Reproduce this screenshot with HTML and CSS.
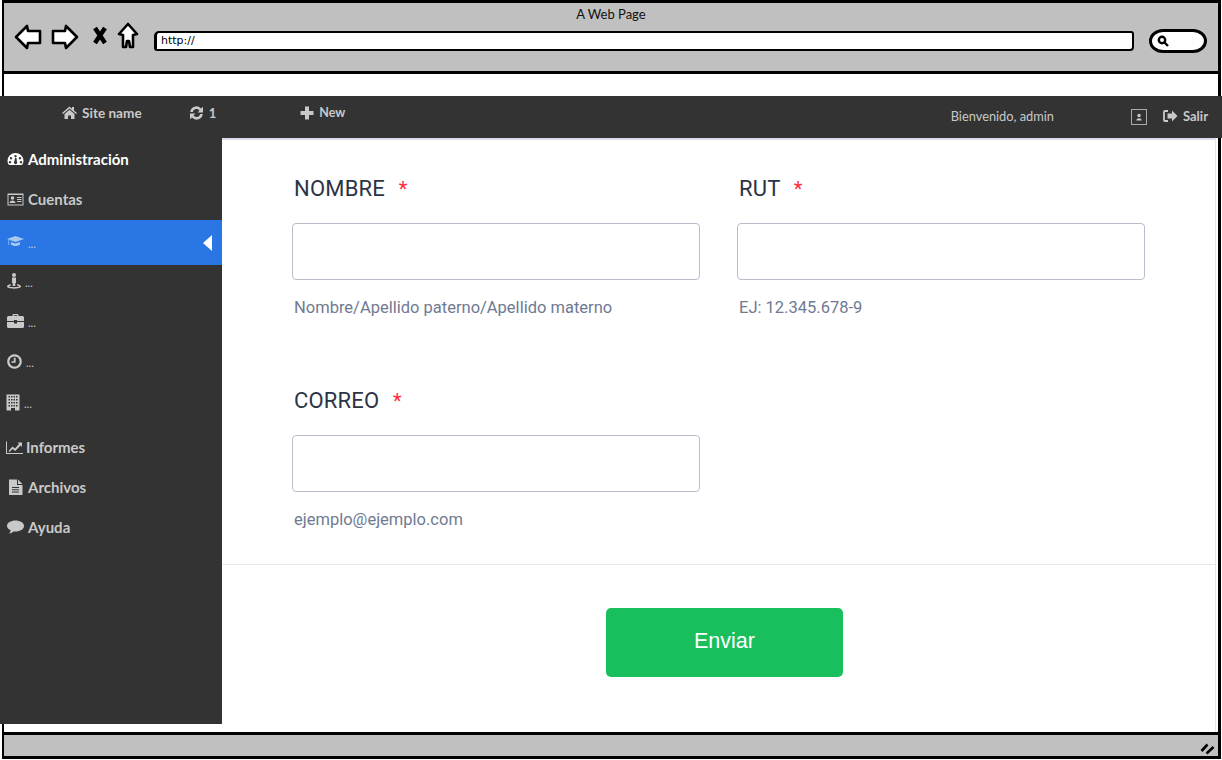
FILE: index.html
```html
<!DOCTYPE html>
<html lang="en">
<head>
    <meta charset="UTF-8">
    <title>A Web Page</title>
    <link rel="stylesheet" href="styles.css">
</head>
<body>
    <div class="window">
        <div class="chrome">
            <div class="chrome-title">A Web Page</div>
            <div class="chrome-tools">
                <svg class="tool tool-back" viewBox="0 0 28 26"><path d="M2 13 L13 2 L14 7 L26 7 L26 19 L14 19 L13 24 Z"/></svg>
                <svg class="tool tool-fwd" viewBox="0 0 28 26"><path d="M26 13 L15 2 L14 7 L2 7 L2 19 L14 19 L15 24 Z"/></svg>
                <svg class="tool tool-x" viewBox="0 0 16 19"><path d="M3 2 L13 17 M13 2 L3 17"/></svg>
                <svg class="tool tool-home" viewBox="0 0 22 27"><path d="M11 2 L20 12 L16 13 L16 25 L13 25 L12 19 L10 19 L9 25 L6 25 L6 13 L2 12 Z"/></svg>
                <div class="url-bar">http://</div>
                <div class="search-box">
                    <svg class="search-icon" viewBox="0 0 12 12"><circle cx="5" cy="5" r="3.2"/><path d="M7.5 7.5 L11 11"/></svg>
                </div>
            </div>
        </div>

        <div class="strip"></div>

        <!-- top navigation -->
        <div class="topnav">
            <div class="nav-item nav-site">
                <svg class="ico" width="15" height="13" viewBox="0 0 15 13"><path d="M7.5 0.5 L10 2.7 V1 H12 V4.5 L15 7 L14 8 L7.5 2.5 L1 8 L0 7 Z M2.5 8 L7.5 3.8 L12.5 8 V13 H9 V9.5 H6 V13 H2.5 Z"/></svg>
                <span>Site name</span>
            </div>
            <div class="nav-item nav-sync">
                <svg class="ico" width="15" height="14" viewBox="0 0 15 14"><path d="M1.2 6 A6.2 6.2 0 0 1 12 2.4 L14 0.8 V6.4 H8.6 L10.5 4.4 A3.8 3.8 0 0 0 3.8 6 Z M13.8 8 A6.2 6.2 0 0 1 3 11.6 L1 13.2 V7.6 H6.4 L4.5 9.6 A3.8 3.8 0 0 0 11.2 8 Z"/></svg>
                <span>1</span>
            </div>
            <div class="nav-item nav-new">
                <svg class="ico" width="14" height="14" viewBox="0 0 14 14"><path d="M5 0.5 H9 V5 H13.5 V9 H9 V13.5 H5 V9 H0.5 V5 H5 Z"/></svg>
                <span>New</span>
            </div>
            <div class="nav-item nav-welcome">Bienvenido, admin</div>
            <div class="nav-user">
                <svg class="ico" width="6" height="8" viewBox="0 0 8 9"><circle cx="4" cy="2.5" r="2.2"/><path d="M0.5 9 C0.5 5 7.5 5 7.5 9 Z"/></svg>
            </div>
            <div class="nav-item nav-exit">
                <svg class="ico" width="15" height="12" viewBox="0 0 15 12"><path d="M5 1 H2 Q1 1 1 2 V10 Q1 11 2 11 H5" fill="none" stroke="currentColor" stroke-width="1.8"/><path d="M9 0.5 L14.5 6 L9 11.5 V8.5 H4.5 V3.5 H9 Z"/></svg>
                <span>Salir</span>
            </div>
        </div>

        <div class="main">
            <ul class="sidebar">
                <li class="side-item side-current">
                    <svg class="ico" width="17" height="14" viewBox="0 0 17 14"><path fill-rule="evenodd" d="M8.5 1 A8 8 0 0 1 16.5 9 Q16.5 11.5 15 13 H2 Q0.5 11.5 0.5 9 A8 8 0 0 1 8.5 1 Z M8.5 3 a1.2 1.2 0 1 0 0.01 0 Z M4 5 a1.2 1.2 0 1 0 0.01 0 Z M13 5 a1.2 1.2 0 1 0 0.01 0 Z M3 9 a1.2 1.2 0 1 0 0.01 0 Z M14 9 a1.2 1.2 0 1 0 0.01 0 Z M8 6 L9.5 6 L9.8 9.2 A1.7 1.7 0 1 1 7.4 9.2 Z"/></svg>
                    <span>Administración</span>
                </li>
                <li class="side-item">
                    <svg class="ico" width="17" height="13" viewBox="0 0 17 13"><path fill-rule="evenodd" d="M0.5 0.5 H16.5 V12.5 H0.5 Z M1.5 2 V11.5 H15.5 V2 Z"/><circle cx="5.5" cy="5" r="1.8"/><path d="M2.5 10 C2.5 6.5 8.5 6.5 8.5 10 Z M10 4 H14.5 V5 H10 Z M10 6 H14.5 V7 H10 Z M10 8 H14.5 V9 H10 Z"/></svg>
                    <span>Cuentas</span>
                </li>
                <li class="side-item side-active">
                    <svg class="ico ico-cap" width="17" height="13" viewBox="0 0 17 13"><path d="M8.5 1 L17 4 L8.5 7 L0 4 Z M4 7 L8.5 8.6 L13 7 V9.5 Q8.5 12.5 4 9.5 Z M1.5 5 H2.2 V10 H1.5 Z"/></svg>
                    <span class="side-dots">...</span>
                    <span class="side-arrow"></span>
                </li>
                <li class="side-item">
                    <svg class="ico ico-view" width="14" height="16" viewBox="0 0 14 16"><circle cx="7" cy="2" r="2"/><path d="M5 4.5 H9 V10 H8.3 V13 H5.7 V10 H5 Z M4 11.3 V12.6 C2.8 12.8 2 13.2 2 13.6 C2 14.3 12 14.3 12 13.6 C12 13.2 11.2 12.8 10 12.6 V11.3 C12.4 11.6 14 12.4 14 13.6 C14 16.4 0 16.4 0 13.6 C0 12.4 1.6 11.6 4 11.3 Z"/></svg>
                    <span class="side-dots">...</span>
                </li>
                <li class="side-item">
                    <svg class="ico" width="17" height="14" viewBox="0 0 17 14"><path d="M5.5 2 V1 Q5.5 0 6.5 0 H10.5 Q11.5 0 11.5 1 V2 H15.5 Q17 2 17 3.5 V7 H10 V6 H7 V7 H0 V3.5 Q0 2 1.5 2 Z M6.8 2 H10.2 V1.2 H6.8 Z M0 8 H7 V9.5 H10 V8 H17 V12.5 Q17 14 15.5 14 H1.5 Q0 14 0 12.5 Z"/></svg>
                    <span class="side-dots">...</span>
                </li>
                <li class="side-item">
                    <svg class="ico" width="15" height="15" viewBox="0 0 15 15"><path fill-rule="evenodd" d="M7.5 0.2 A7.3 7.3 0 1 1 7.49 0.2 Z M7.5 2.4 A5.1 5.1 0 1 0 7.51 2.4 Z M6.8 3.8 H8.6 V8.8 H4.4 V7.2 H6.8 Z"/></svg>
                    <span class="side-dots">...</span>
                </li>
                <li class="side-item side-building">
                    <svg class="ico" width="14" height="17" viewBox="0 0 14 17"><path fill-rule="evenodd" d="M0.5 0.5 H13.5 V16.5 H9 V14 H5 V16.5 H0.5 Z M2.5 2 V3.5 H4 V2 Z M5 2 V3.5 H6.5 V2 Z M7.5 2 V3.5 H9 V2 Z M10 2 V3.5 H11.5 V2 Z M2.5 5 V6.5 H4 V5 Z M5 5 V6.5 H6.5 V5 Z M7.5 5 V6.5 H9 V5 Z M10 5 V6.5 H11.5 V5 Z M2.5 8 V9.5 H4 V8 Z M5 8 V9.5 H6.5 V8 Z M7.5 8 V9.5 H9 V8 Z M10 8 V9.5 H11.5 V8 Z M2.5 11 V12.5 H4 V11 Z M5 11 V12.5 H6.5 V11 Z M7.5 11 V12.5 H9 V11 Z M10 11 V12.5 H11.5 V11 Z"/></svg>
                    <span class="side-dots">...</span>
                </li>
                <li class="side-item side-reports">
                    <svg class="ico" width="17" height="13" viewBox="0 0 17 13"><path d="M0 0.5 H1 V12 H17 V13 H0 Z M2.5 10 L6.5 5.5 L9 7.5 L13 3 L11.5 1.5 H16 V6 L14.6 4.6 L9.2 10 L6.6 8 L3.5 11 Z"/></svg>
                    <span>Informes</span>
                </li>
                <li class="side-item side-files">
                    <svg class="ico" width="15" height="16" viewBox="0 0 15 16"><path fill-rule="evenodd" d="M1 0.5 H9 V6 H14.5 V16 H1 Z M10 0.5 L14.5 5 H10 Z M4 8 V9 H11 V8 Z M4 10.3 V11.3 H11 V10.3 Z M4 12.6 V13.6 H11 V12.6 Z"/></svg>
                    <span>Archivos</span>
                </li>
                <li class="side-item">
                    <svg class="ico" width="17" height="14" viewBox="0 0 17 14"><path d="M8.5 0.5 C13.2 0.5 17 2.8 17 6 C17 9.2 13.2 11.5 8.5 11.5 C7.8 11.5 7.2 11.4 6.6 11.4 C5.2 12.6 3.6 13.3 2 13.5 C3 12.5 3.6 11.4 3.7 10.3 C1.5 9.3 0 7.8 0 6 C0 2.8 3.8 0.5 8.5 0.5 Z"/></svg>
                    <span>Ayuda</span>
                </li>
            </ul>

            <div class="content">
                <form class="form-grid">
                    <div class="field">
                        <label class="field-label" for="nombre">NOMBRE <span class="req">*</span></label>
                        <input class="field-input" type="text" id="nombre" name="nombre">
                        <div class="field-help">Nombre/Apellido paterno/Apellido materno</div>
                    </div>
                    <div class="field">
                        <label class="field-label" for="rut">RUT <span class="req">*</span></label>
                        <input class="field-input" type="text" id="rut" name="rut">
                        <div class="field-help">EJ: 12.345.678-9</div>
                    </div>
                    <div class="field">
                        <label class="field-label" for="correo">CORREO <span class="req">*</span></label>
                        <input class="field-input" type="text" id="correo" name="correo">
                        <div class="field-help">ejemplo@ejemplo.com</div>
                    </div>
                </form>
                <div class="form-actions">
                    <button class="btn-send" type="button">Enviar</button>
                </div>
            </div>
        </div>

        <div class="statusbar">
            <svg class="grip" width="15" height="12" viewBox="0 0 15 12"><path d="M1.5 8 L7.5 1.5 M6.5 10.5 L13.5 4"/></svg>
        </div>
    </div>
</body>
</html>
```

FILE: styles.css
```css
html, body {
    margin: 0;
    padding: 0;
    background-color: white;
}

* {
    box-sizing: border-box;
}

/* Browser mockup frame */
.window {
    display: flex;
    flex-direction: column;
    width: 1219px;
    height: 759px;
    margin-left: 2px;
    border: 3px solid black;
    border-left-width: 2px;
}

.chrome {
    height: 71px;
    flex: none;
    background-color: #c0c0c0;
    border-bottom: 3px solid black;
}

.chrome-title {
    height: 20px;
    padding-top: 3px;
    text-align: center;
    font-family: "Lato", sans-serif;
    font-size: 13px;
    line-height: 16px;
    color: #111;
}

.chrome-tools {
    display: flex;
    align-items: center;
    height: 30px;
    padding-left: 10px;
}

.tool {
    flex: none;
    margin-top: -2px;
    fill: white;
    stroke: black;
    stroke-width: 2.6;
    stroke-linejoin: round;
}

.tool-back {
    width: 28px;
    height: 26px;
}

.tool-fwd {
    width: 28px;
    height: 26px;
    margin-left: 9px;
}

.tool-x {
    width: 16px;
    height: 19px;
    margin-left: 13px;
    margin-top: -6px;
    stroke-width: 4.5;
    fill: none;
}

.tool-home {
    width: 22px;
    height: 27px;
    margin-left: 9px;
    margin-top: -5px;
}

.url-bar {
    width: 980px;
    height: 20px;
    margin-left: 15px;
    margin-top: 6px;
    padding-left: 4px;
    background-color: white;
    border: 2px solid black;
    border-left-width: 3px;
    border-radius: 5px 3px 4px 3px;
    font-family: "DejaVu Sans", sans-serif;
    font-size: 11px;
    line-height: 16px;
    color: black;
}

.search-box {
    display: flex;
    align-items: center;
    width: 58px;
    height: 24px;
    margin-left: 15px;
    margin-top: 6px;
    padding-left: 5px;
    background-color: white;
    border: 3px solid black;
    border-radius: 14px / 12px;
}

.search-icon {
    width: 12px;
    height: 12px;
    fill: none;
    stroke: black;
    stroke-width: 2.4;
}

.strip {
    height: 22px;
    flex: none;
}

/* Dark top navigation */
.topnav {
    display: flex;
    align-items: center;
    flex: none;
    height: 42px;
    margin: 0 -4px 0 -4px;
    background-color: #333333;
    color: #c9c9c9;
    font-family: "Lato", sans-serif;
    font-size: 13px;
    font-weight: 700;
}

.nav-item {
    display: flex;
    align-items: center;
    gap: 5px;
    margin-top: -9px;
}

.ico {
    flex: none;
    fill: currentColor;
}

.nav-site {
    margin-left: 62px;
    font-size: 13.6px;
}

.nav-sync {
    margin-left: 47px;
}

.nav-new {
    margin-left: 84px;
    font-size: 12.5px;
}

.nav-welcome {
    margin-left: auto;
    margin-top: -2px;
    font-size: 12.8px;
    font-weight: 400;
}

.nav-user {
    display: flex;
    align-items: center;
    justify-content: center;
    width: 16px;
    height: 16px;
    margin-left: 77px;
    border: 1px solid #aaa;
}

.nav-exit {
    margin-left: 16px;
    margin-right: 14px;
    margin-top: -2px;
}

.main {
    display: flex;
    flex: 1;
    min-height: 0;
}

/* Left menu */
.sidebar {
    flex: none;
    width: 222px;
    height: 586px;
    margin: 0 0 0 -4px;
    padding: 2px 0 0 0;
    list-style: none;
    background-color: #333333;
    color: #c9c9c9;
    font-family: "Lato", sans-serif;
    font-size: 15px;
    font-weight: 700;
}

.side-item {
    position: relative;
    display: flex;
    align-items: center;
    gap: 4px;
    height: 40px;
    padding-left: 7px;
    padding-bottom: 2px;
}

.side-current {
    color: white;
}

.side-active {
    height: 45px;
    margin-bottom: -3px;
    background-color: #2b76e5;
}

.side-dots {
    margin-top: 3px;
    font-size: 11px;
    font-weight: 400;
}

.ico-cap {
    color: #a9c8ee;
}

.side-arrow {
    position: absolute;
    right: 10px;
    top: 15px;
    border-top: 8px solid transparent;
    border-bottom: 8px solid transparent;
    border-right: 9px solid white;
}

.side-building {
    margin-top: 1px;
    padding-left: 6px;
}

.side-reports {
    margin-top: 5px;
    padding-left: 6px;
    gap: 3px;
}

.side-files {
    padding-left: 8px;
    gap: 5px;
}

/* Form panel */
.content {
    flex: 1;
    margin-right: 2px;
    background-color: white;
    border-top: 2px solid #dcdcea;
    border-right: 1px solid #e6e6ef;
}

.form-grid {
    display: grid;
    grid-template-columns: 408px 408px;
    column-gap: 37px;
    row-gap: 71px;
    padding: 37px 0 34px 70px;
    border-bottom: 1px solid #e8e8f0;
    font-family: "Roboto", sans-serif;
}

.field-label {
    display: block;
    height: 24px;
    margin-bottom: 22px;
    padding-left: 2px;
    font-size: 22px;
    letter-spacing: 0.2px;
    line-height: 24px;
    color: #2c3345;
}

.req {
    margin-left: 8px;
    font-size: 20px;
    color: #ff2a3c;
}

.field-input {
    display: block;
    width: 100%;
    height: 57px;
    border: 1px solid #b8bdc9;
    border-radius: 4px;
    background-color: white;
}

.field-help {
    height: 20px;
    margin-top: 18px;
    padding-left: 2px;
    font-size: 16.5px;
    line-height: 20px;
    color: #6f7a92;
}

.form-actions {
    padding: 43px 0 0 384px;
}

.btn-send {
    width: 237px;
    height: 69px;
    padding-bottom: 3px;
    border: none;
    border-radius: 5px;
    background-color: #19bf5d;
    color: white;
    font-family: "Liberation Sans", sans-serif;
    font-size: 21.5px;
}

/* Bottom status bar */
.statusbar {
    display: flex;
    align-items: center;
    justify-content: flex-end;
    flex: none;
    height: 24px;
    padding-right: 3px;
    background-color: #c0c0c0;
    border-top: 3px solid black;
}

.grip {
    fill: none;
    stroke: black;
    stroke-width: 2.6;
    margin-top: 6px;
}
```
